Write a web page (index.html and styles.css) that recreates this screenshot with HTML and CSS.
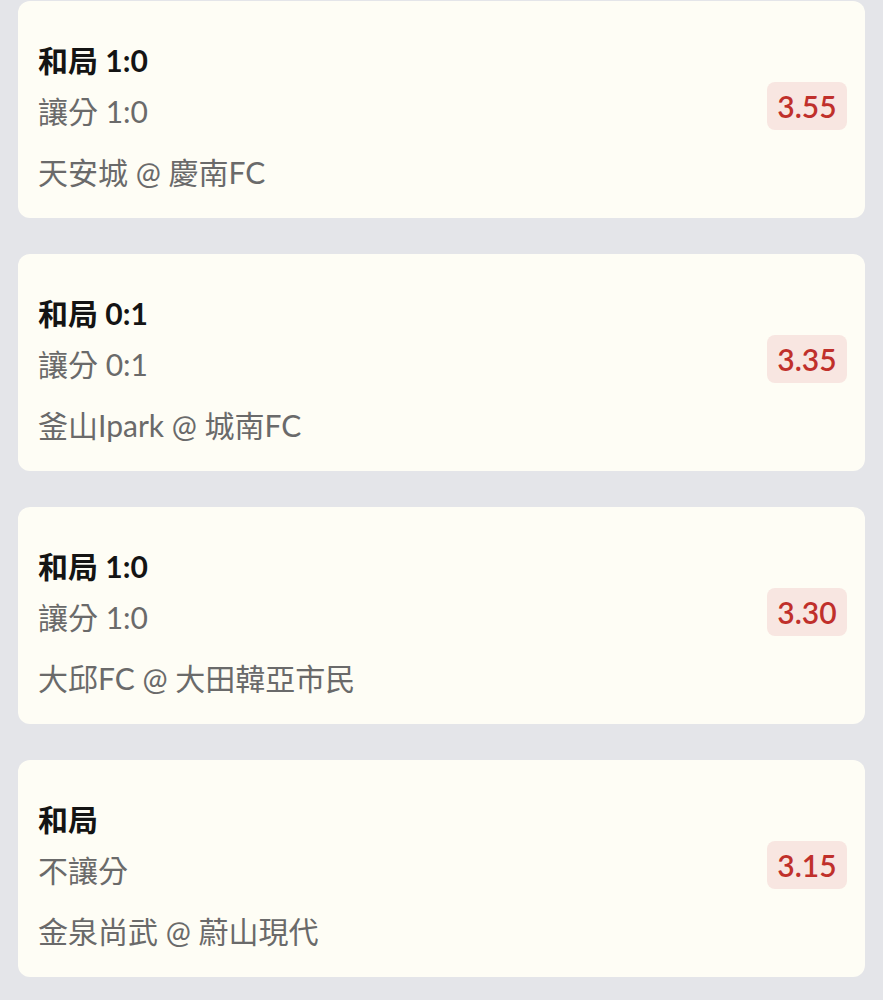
FILE: index.html
```html
<!DOCTYPE html>
<html lang="zh-Hant">
<head>
    <meta charset="UTF-8">
    <meta name="viewport" content="width=device-width, initial-scale=1.0">
    <title>和局</title>
    <link rel="stylesheet" href="styles.css">
</head>
<body>
    <div class="list">
        <div class="card">
            <div class="info">
                <div class="title">和局 1:0</div>
                <div class="handicap">讓分 1:0</div>
                <div class="match">天安城 @ 慶南FC</div>
            </div>
            <div class="odds">3.55</div>
        </div>

        <div class="card">
            <div class="info">
                <div class="title">和局 0:1</div>
                <div class="handicap">讓分 0:1</div>
                <div class="match">釜山Ipark @ 城南FC</div>
            </div>
            <div class="odds">3.35</div>
        </div>

        <div class="card">
            <div class="info">
                <div class="title">和局 1:0</div>
                <div class="handicap">讓分 1:0</div>
                <div class="match">大邱FC @ 大田韓亞市民</div>
            </div>
            <div class="odds">3.30</div>
        </div>

        <div class="card">
            <div class="info">
                <div class="title">和局</div>
                <div class="handicap">不讓分</div>
                <div class="match">金泉尚武 @ 蔚山現代</div>
            </div>
            <div class="odds">3.15</div>
        </div>
    </div>
</body>
</html>
```

FILE: styles.css
```css
body {
    margin: 0;
    padding: 0;
    background-color: #e4e5e9;
    font-family: 'Lato', 'Noto Sans CJK TC', sans-serif;
}

.list {
    display: flex;
    flex-direction: column;
    gap: 36px;
    padding: 1px 18px 20px 18px;
}

.card {
    display: flex;
    align-items: center;
    justify-content: space-between;
    height: 217px;
    box-sizing: border-box;
    padding: 0 18px 0 20px;
    background-color: #fefdf5;
    border-radius: 12px;
}

.info {
    display: flex;
    flex-direction: column;
    padding: 40px 0 27px 0;
}

.title {
    font-size: 30px;
    font-weight: bold;
    line-height: 38px;
    color: #141414;
}

.handicap {
    margin-top: 13px;
    font-size: 30px;
    line-height: 38px;
    color: #6a6a6a;
}

.match {
    margin-top: 23px;
    font-size: 30px;
    line-height: 38px;
    color: #6a6a6a;
}

.odds {
    width: 80px;
    height: 48px;
    margin-bottom: 7px;
    line-height: 48px;
    text-align: center;
    font-size: 30px;
    font-weight: 600;
    color: #c0302b;
    background-color: #f8e6e1;
    border-radius: 8px;
}
```
